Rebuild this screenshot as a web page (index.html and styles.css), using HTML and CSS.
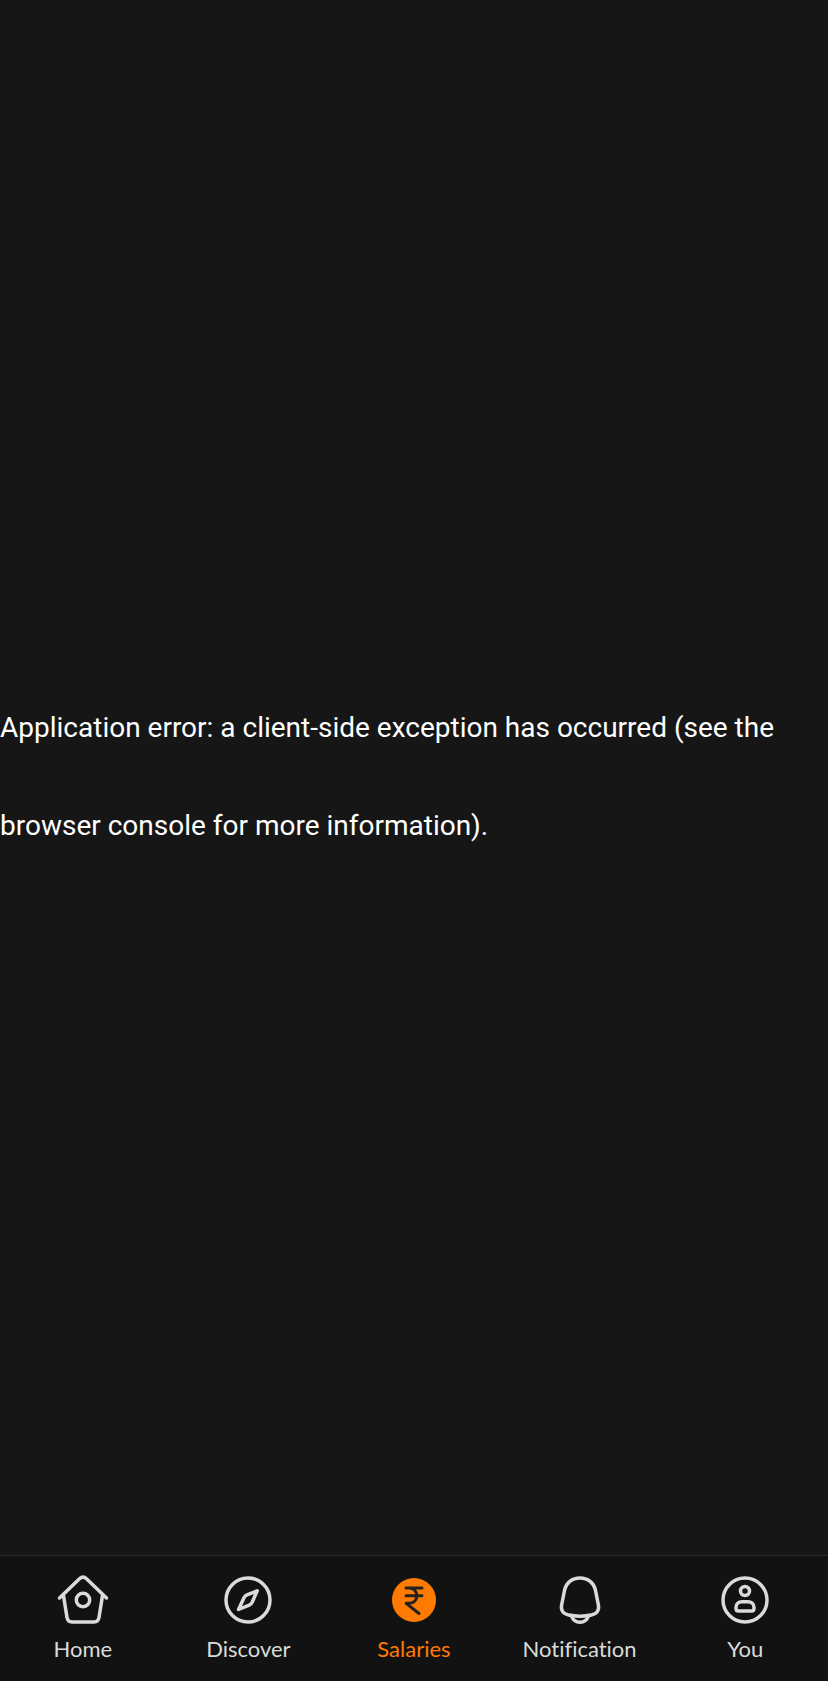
FILE: index.html
```html
<!DOCTYPE html>
<html lang="en">
<head>
  <meta charset="UTF-8" />
  <meta name="viewport" content="width=device-width, initial-scale=1" />
  <title>Salaries</title>
  <link rel="stylesheet" href="styles.css">
</head>
<body>

<main class="error-page">
  <h2 class="error-text">Application error: a client-side exception has occurred (see the browser console for more information).</h2>
</main>

<nav class="bottom-nav">
  <a class="nav-item" href="#home">
    <svg class="nav-icon" viewBox="0 0 56 56" aria-hidden="true">
      <path d="M4.5 26 L24.5 6.8 Q28 3.6 31.5 6.8 L51.5 26" />
      <path d="M8.5 23.5 L12 45.5 Q12.8 50 17 50 H39 Q43.2 50 44 45.5 L47.5 23.5" />
      <circle cx="28" cy="28" r="6.7" />
    </svg>
    <span>Home</span>
  </a>
  <a class="nav-item" href="#discover">
    <svg class="nav-icon" viewBox="0 0 56 56" aria-hidden="true">
      <circle cx="28" cy="28" r="22" />
      <path d="M37.2 18.8 L27 22.8 Q25 23.7 24 25.7 L18.5 37.5 L29.2 33.2 Q31.2 32.3 32.2 30.3 Z" />
    </svg>
    <span>Discover</span>
  </a>
  <a class="nav-item active" href="#salaries">
    <svg class="nav-icon" viewBox="0 0 56 56" aria-hidden="true">
      <circle class="coin" cx="28" cy="28" r="22" />
      <path class="rupee" d="M20 16 H36 M20 23.7 H36 M20 16 H23 C33.5 16 33.5 31.3 23 31.3 H20.2 L33 41.5" />
    </svg>
    <span>Salaries</span>
  </a>
  <a class="nav-item" href="#notification">
    <svg class="nav-icon" viewBox="0 0 56 56" aria-hidden="true">
      <path d="M28 6 C20 6 14 11 12.6 18 L9.6 33 C8.6 38.5 11.5 42 16.5 43 Q28 45.4 39.5 43 C44.5 42 47.4 38.5 46.4 33 L43.4 18 C42 11 36 6 28 6 Z" />
      <path d="M19.5 44 C22.5 52.4 33.5 52.4 36.5 44" />
    </svg>
    <span>Notification</span>
  </a>
  <a class="nav-item" href="#you">
    <svg class="nav-icon" viewBox="0 0 56 56" aria-hidden="true">
      <circle cx="28" cy="28" r="22" />
      <circle cx="28" cy="19" r="4.5" />
      <path d="M25 29.8 H31 C34.5 29.8 37 32 37 35.4 V36.5 Q37 39 34.5 39 H21.5 Q19 39 19 36.5 V35.4 C19 32 21.5 29.8 25 29.8 Z" />
    </svg>
    <span>You</span>
  </a>
</nav>

</body>
</html>
```
FILE: styles.css
```css
* {
  box-sizing: border-box;
}

body {
  margin: 0;
  min-height: 100vh;
  display: flex;
  flex-direction: column;
  background-color: #161616;
  color: #fff;
  font-family: Roboto, sans-serif;
}

.error-page {
  flex: 1;
  display: flex;
  align-items: center;
  padding-bottom: 2px;
}

.error-text {
  margin: 0;
  font-size: 28px;
  font-weight: 400;
  line-height: 98px;
}

.bottom-nav {
  display: flex;
  padding: 16px 0;
  background-color: #121212;
  border-top: 1px solid #282828;
}

.nav-item {
  flex: 1 1 0;
  display: flex;
  flex-direction: column;
  align-items: center;
  gap: 4px;
  color: #d9dcda;
  font-family: Lato, sans-serif;
  font-size: 22px;
  font-variant-ligatures: none;
  line-height: 33px;
  text-decoration: none;
}

.nav-item.active {
  color: #ff7a00;
}

.nav-icon {
  width: 56px;
  height: 56px;
  fill: none;
  stroke: currentColor;
  stroke-width: 3.5;
  stroke-linecap: round;
  stroke-linejoin: round;
}

.coin {
  fill: currentColor;
  stroke: none;
}

.rupee {
  stroke: #222;
  stroke-width: 3;
}
```
